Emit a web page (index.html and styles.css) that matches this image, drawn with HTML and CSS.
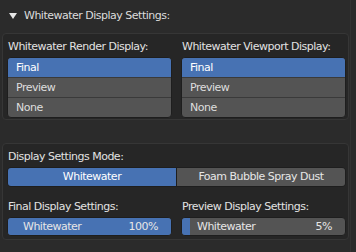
FILE: index.html
```html
<!DOCTYPE html>
<html lang="en">
<head>
    <meta charset="UTF-8">
    <meta name="viewport" content="width=device-width, initial-scale=1.0">
    <title>Whitewater Display Settings</title>
    <link rel="stylesheet" href="styles.css">
</head>
<body>
    <div class="header">
        <svg class="arrow" width="8" height="6" viewBox="0 0 8 6"><polygon points="0,0 8,0 4,6" fill="#e6e6e6"/></svg>
        <span>Whitewater Display Settings:</span>
    </div>

    <div class="panel">
        <div class="cols">
            <div class="col">
                <div class="label">Whitewater Render Display:</div>
                <ul class="list">
                    <li class="active">Final</li>
                    <li>Preview</li>
                    <li>None</li>
                </ul>
            </div>
            <div class="col">
                <div class="label">Whitewater Viewport Display:</div>
                <ul class="list">
                    <li class="active">Final</li>
                    <li>Preview</li>
                    <li>None</li>
                </ul>
            </div>
        </div>
    </div>

    <div class="panel panel-mode">
        <div class="label">Display Settings Mode:</div>
        <div class="segmented">
            <div class="seg active">Whitewater</div>
            <div class="seg">Foam Bubble Spray Dust</div>
        </div>
        <div class="cols">
            <div class="col">
                <div class="label">Final Display Settings:</div>
                <div class="slider">
                    <div class="fill" style="width: 100%"></div>
                    <span class="name">Whitewater</span>
                    <span class="value">100%</span>
                </div>
            </div>
            <div class="col">
                <div class="label">Preview Display Settings:</div>
                <div class="slider">
                    <div class="fill" style="width: 5%"></div>
                    <span class="name">Whitewater</span>
                    <span class="value">5%</span>
                </div>
            </div>
        </div>
    </div>
    <div class="scrollbar"></div>
</body>
</html>
```

FILE: styles.css
```css
body {
    margin: 0;
    background-color: #2b2b2b;
    font-family: "DejaVu Sans", sans-serif;
    font-size: 11px;
    letter-spacing: -0.5px;
    color: #e2e2e2;
    width: 356px;
    height: 252px;
    overflow: hidden;
    position: relative;
}
.header {
    height: 33px;
    display: flex;
    align-items: center;
    padding-left: 9px;
    padding-bottom: 2px;
    box-sizing: border-box;
    color: #dcdcdc;
}
.arrow {
    margin-right: 7px;
}
.panel {
    margin-left: 2px;
    width: 347px;
    box-sizing: border-box;
    background-color: #262626;
    border: 1px solid #363636;
    border-radius: 4px;
    padding: 3px 2px 1px 4px;
}
.panel-mode {
    margin-top: 23px;
    padding-bottom: 3px;
}
.cols {
    display: grid;
    grid-template-columns: 1fr 1fr;
    column-gap: 9px;
}
.label {
    height: 20px;
    line-height: 20px;
    padding-left: 1px;
}
.list {
    list-style: none;
    margin: 0;
    padding: 0;
    border: 1px solid #1e1e1e;
    border-radius: 4px;
    overflow: hidden;
    background-color: #545454;
}
.list li {
    height: 19px;
    line-height: 19px;
    padding-left: 8px;
    border-top: 1px solid #3a3a3a;
    color: #dedede;
}
.list li:first-child {
    border-top: none;
}
.list li.active {
    background-color: #4772b3;
    color: #ffffff;
}
.segmented {
    display: flex;
    height: 18px;
    margin-bottom: 10px;
    border: 1px solid #1e1e1e;
    border-radius: 4px;
    overflow: hidden;
}
.seg {
    flex: 1;
    text-align: center;
    line-height: 18px;
    background-color: #545454;
    color: #e6e6e6;
}
.seg.active {
    background-color: #4772b3;
    color: #ffffff;
    border-right: 1px solid #1e1e1e;
}
.slider {
    position: relative;
    height: 17px;
    border: 1px solid #1e1e1e;
    border-radius: 4px;
    overflow: hidden;
    background-color: #545454;
    display: flex;
    justify-content: space-between;
    align-items: center;
    padding: 0 13px 0 15px;
}
.slider .fill {
    position: absolute;
    left: 0;
    top: 0;
    bottom: 0;
    background-color: #4772b3;
}
.slider span {
    position: relative;
    color: #e6e6e6;
}
.scrollbar {
    position: absolute;
    left: 350px;
    top: 0;
    width: 1px;
    height: 252px;
    background-color: #333333;
}
```
